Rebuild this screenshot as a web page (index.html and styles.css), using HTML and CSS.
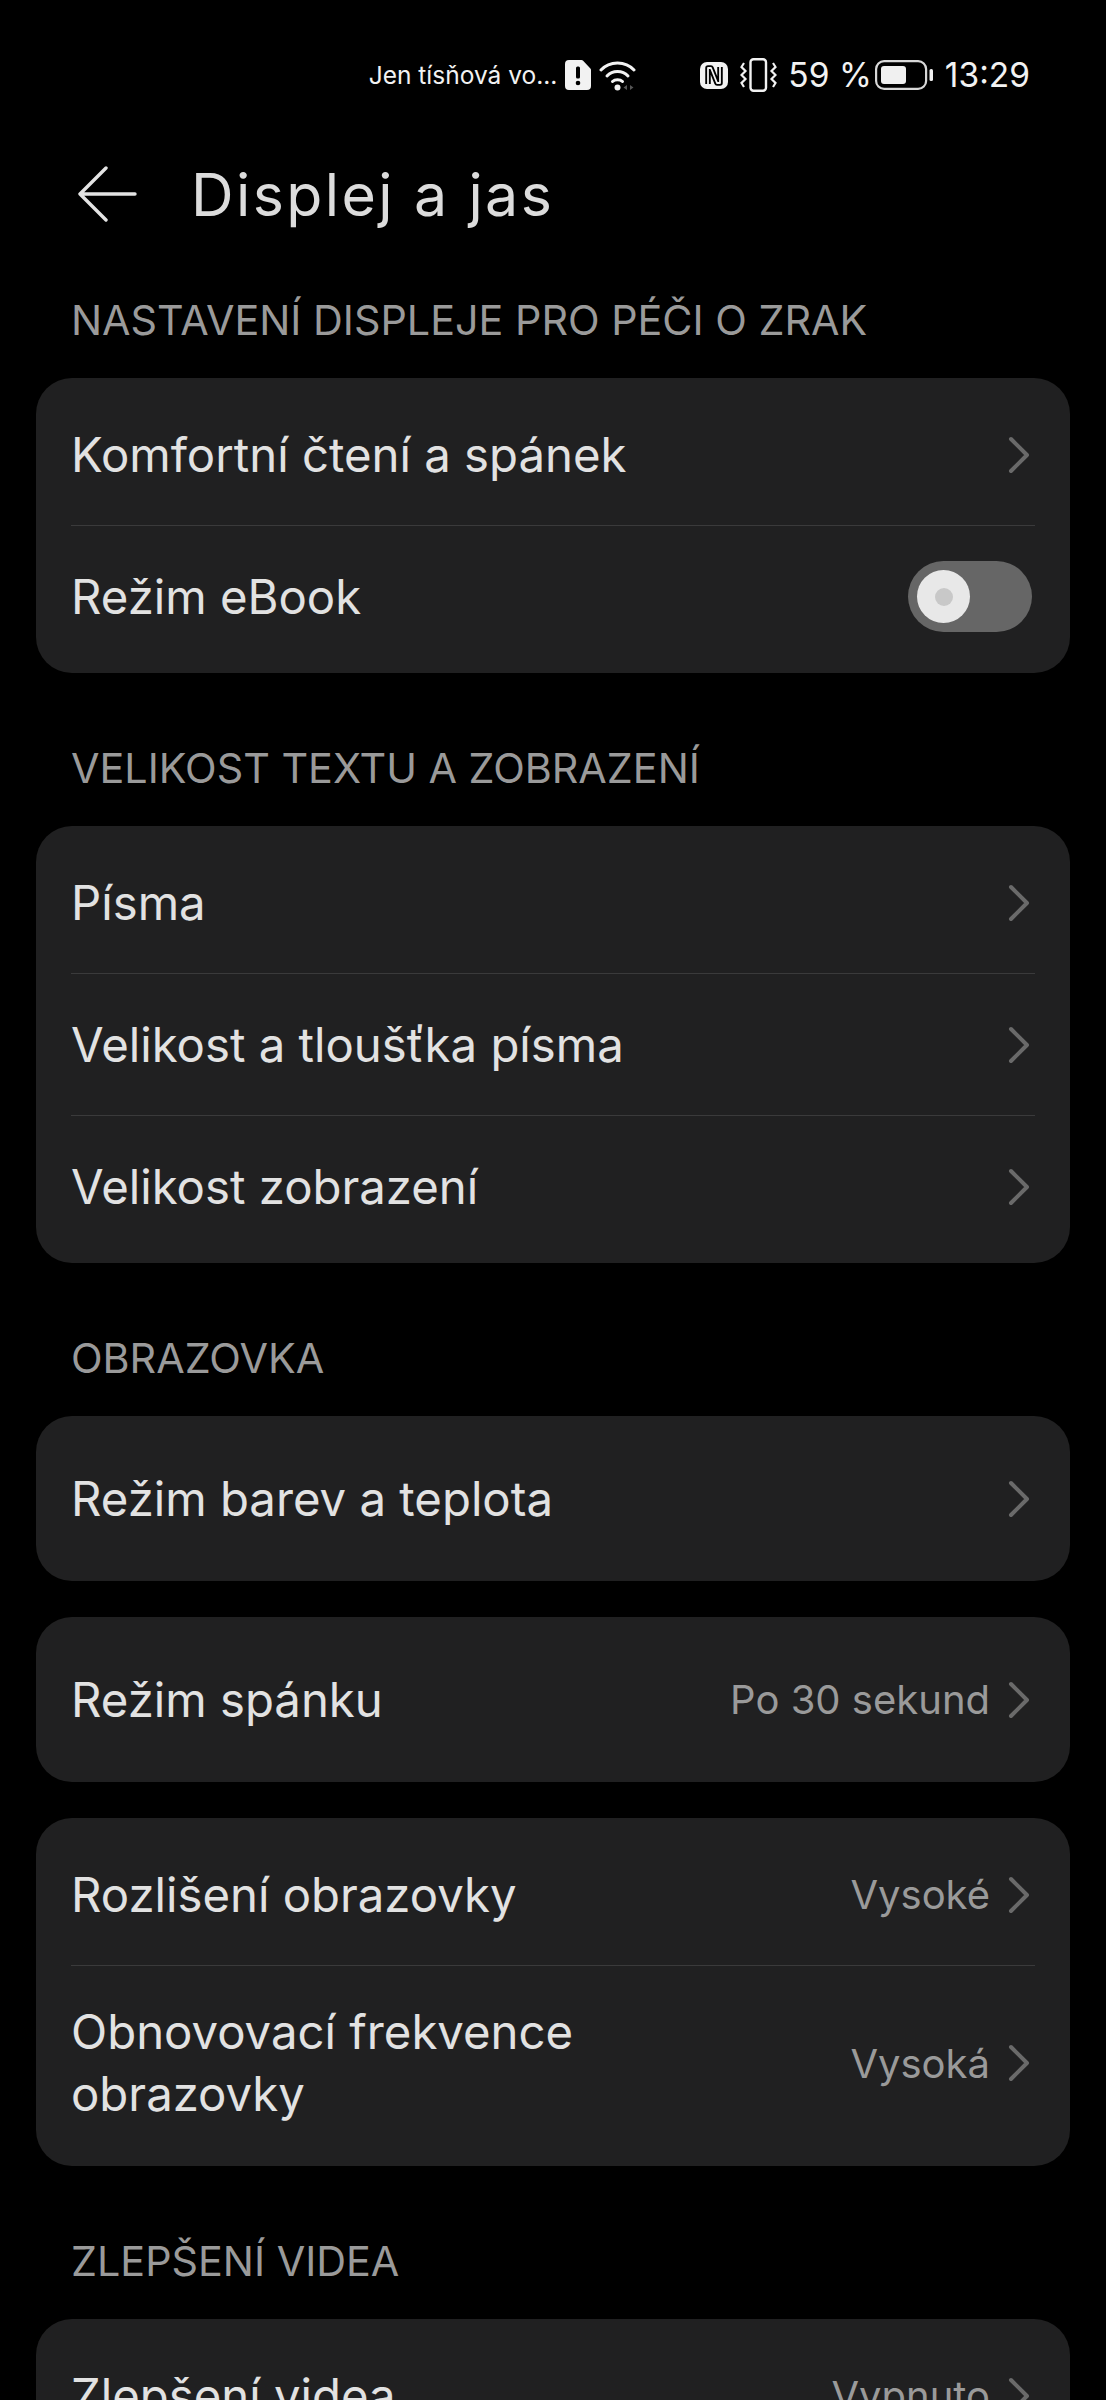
FILE: index.html
```html
<!DOCTYPE html>
<html lang="cs">
<head>
    <meta charset="UTF-8">
    <meta name="viewport" content="width=device-width, initial-scale=1.0">
    <title>Displej a jas</title>
    <link rel="stylesheet" href="styles.css">
</head>
<body>
    <div class="status-bar">
        <span class="carrier">Jen tísňová vo...</span>
        <svg class="ico-sim" viewBox="0 0 26 30"><path d="M4 0h12.5a2 2 0 0 1 1.4.6l7.5 7.8a2 2 0 0 1 .6 1.4V26a4 4 0 0 1-4 4H4a4 4 0 0 1-4-4V4a4 4 0 0 1 4-4z" fill="#f2f2f2"/><rect x="11" y="6.5" width="4" height="12" rx="1.5" fill="#000"/><circle cx="13" cy="23" r="2.3" fill="#000"/></svg>
        <svg class="ico-wifi" viewBox="0 0 37 31"><g fill="none" stroke="#f2f2f2" stroke-width="3" stroke-linecap="round"><path d="M2 10c8.500-9.500 24.500-9.500 33 0"/><path d="M8 16c5.500-6 15.500-6 21 0"/><path d="M13.500 21.500c2.500-2.500 7.500-2.500 10 0"/></g><circle cx="18.500" cy="27.500" r="3" fill="#f2f2f2"/><path d="M28 25v5l-3.500-2.500zM31 25v5l3.500-2.500z" fill="#555"/></svg>
        <svg class="ico-nfc" viewBox="0 0 28 27"><rect width="28" height="27" rx="7" fill="#f2f2f2"/><path d="M8 22V6h3l6 15h3V5" fill="none" stroke="#000" stroke-width="5.500" stroke-linejoin="round"/><path d="M8 22V6h3l6 15h3V5" fill="none" stroke="#f2f2f2" stroke-width="1.800" stroke-linejoin="round"/></svg>
        <svg class="ico-vibrate" viewBox="0 0 37 34"><rect x="10.500" y="1.200" width="15.500" height="31.600" rx="3" fill="none" stroke="#f2f2f2" stroke-width="2.400"/><g fill="none" stroke="#f2f2f2" stroke-width="2.200"><path d="M4 5L1.500 9l4 4-4 4 4 4-4 4 2.500 4"/><path d="M33 5l2.500 4-4 4 4 4-4 4 4 4-2.500 4"/></g></svg>
        <span class="battery-pct">59 %</span>
        <svg class="ico-battery" viewBox="0 0 58 30"><rect x="1.100" y="1.100" width="50" height="27.800" rx="8" fill="none" stroke="#d8d8d8" stroke-width="2.200"/><rect x="6" y="6" width="25" height="18" rx="3" fill="#f0f0f0"/><rect x="54.500" y="9" width="3.500" height="12" rx="1.500" fill="#f0f0f0"/></svg>
        <span class="clock">13:29</span>
    </div>

    <header class="title-bar">
        <svg class="back" viewBox="0 0 60 56"><path d="M29 2L3 28l26 26M3 28h55" fill="none" stroke="#e4e4e4" stroke-width="3.4" stroke-linecap="round" stroke-linejoin="round"/></svg>
        <h1>Displej a jas</h1>
    </header>

    <main>
        <h2>NASTAVENÍ DISPLEJE PRO PÉČI O ZRAK</h2>
        <section class="card">
            <div class="row">
                <span class="label">Komfortní čtení a spánek</span>
                <svg class="chevron" viewBox="0 0 22 38"><path d="M3 3l16 16L3 35" /></svg>
            </div>
            <div class="row">
                <span class="label">Režim eBook</span>
                <span class="toggle"><span class="knob"></span></span>
            </div>
        </section>

        <h2>VELIKOST TEXTU A ZOBRAZENÍ</h2>
        <section class="card">
            <div class="row">
                <span class="label">Písma</span>
                <svg class="chevron" viewBox="0 0 22 38"><path d="M3 3l16 16L3 35" /></svg>
            </div>
            <div class="row">
                <span class="label">Velikost a tloušťka písma</span>
                <svg class="chevron" viewBox="0 0 22 38"><path d="M3 3l16 16L3 35" /></svg>
            </div>
            <div class="row">
                <span class="label">Velikost zobrazení</span>
                <svg class="chevron" viewBox="0 0 22 38"><path d="M3 3l16 16L3 35" /></svg>
            </div>
        </section>

        <h2>OBRAZOVKA</h2>
        <section class="card">
            <div class="row row-single">
                <span class="label">Režim barev a teplota</span>
                <svg class="chevron" viewBox="0 0 22 38"><path d="M3 3l16 16L3 35" /></svg>
            </div>
        </section>
        <section class="card next">
            <div class="row row-single">
                <span class="label">Režim spánku</span>
                <span class="value">Po 30 sekund</span>
                <svg class="chevron" viewBox="0 0 22 38"><path d="M3 3l16 16L3 35" /></svg>
            </div>
        </section>
        <section class="card next">
            <div class="row">
                <span class="label">Rozlišení obrazovky</span>
                <span class="value">Vysoké</span>
                <svg class="chevron" viewBox="0 0 22 38"><path d="M3 3l16 16L3 35" /></svg>
            </div>
            <div class="row row-tall">
                <span class="label">Obnovovací frekvence<br>obrazovky</span>
                <span class="value">Vysoká</span>
                <svg class="chevron" viewBox="0 0 22 38"><path d="M3 3l16 16L3 35" /></svg>
            </div>
        </section>

        <h2>ZLEPŠENÍ VIDEA</h2>
        <section class="card">
            <div class="row">
                <span class="label">Zlepšení videa</span>
                <span class="value">Vypnuto</span>
                <svg class="chevron" viewBox="0 0 22 38"><path d="M3 3l16 16L3 35" /></svg>
            </div>
        </section>
    </main>
</body>
</html>
```

FILE: styles.css
```css
html, body {
    height: 2400px;
    overflow: hidden;
}

body {
    margin: 0;
    padding: 0;
    background-color: #000;
    color: #e2e2e2;
    font-family: Inter, "Noto Sans", sans-serif;
}

/* status bar */
.status-bar {
    height: 56px;
    padding-top: 47px;
    padding-right: 76px;
    display: flex;
    align-items: center;
    justify-content: flex-end;
    color: #f2f2f2;
}

.carrier {
    font-size: 24.5px;
    margin-right: 8px;
}

.battery-pct,
.clock {
    font-size: 33.5px;
}

.ico-sim { width: 26px; height: 30px; margin-right: 8px; }
.ico-wifi { width: 37px; height: 31px; margin-right: 64px; }
.ico-nfc { width: 28px; height: 27px; margin-right: 12px; }
.ico-vibrate { width: 37px; height: 34px; margin-right: 11px; }
.ico-battery { width: 58px; height: 30px; margin: 0 12px 0 3px; }

/* title */
.title-bar {
    height: 96px;
    margin-top: 43px;
    padding-left: 77px;
    display: flex;
    align-items: center;
}

.back {
    width: 60px;
    height: 56px;
}

h1 {
    margin: 0 0 0 54px;
    font-size: 59px;
    font-weight: 400;
    letter-spacing: 2.4px;
    color: #dcdcdc;
}

/* sections */
main {
    padding: 49px 36px 0;
}

h2 {
    margin: 0;
    padding: 0 35px;
    height: 58px;
    line-height: 58px;
    font-size: 41.3px;
    font-weight: 400;
    color: #9a9a9a;
}

.card {
    background-color: #202021;
    border-radius: 36px;
    padding: 6px 35px;
    margin-top: 29px;
    margin-bottom: 66px;
}

.card.next {
    margin-top: -30px;
}

.row {
    min-height: 141px;
    display: flex;
    align-items: center;
    border-top: 1px solid #3a3a3b;
}

.row:first-child {
    border-top: none;
}

.row-single {
    min-height: 153px;
}

.row-tall {
    min-height: 194px;
}

.label {
    flex: 1;
    font-size: 47.3px;
    line-height: 62px;
    color: #e2e2e2;
}

.value {
    font-size: 40px;
    color: #9a9a9a;
    margin-right: 18px;
}

.chevron {
    width: 22px;
    height: 38px;
    margin-right: 5px;
    fill: none;
    stroke: #6a6a6a;
    stroke-width: 4;
    stroke-linecap: round;
    stroke-linejoin: round;
}

/* toggle */
.toggle {
    width: 124px;
    height: 71px;
    margin-right: 3px;
    border-radius: 36px;
    background-color: #666;
    display: flex;
    align-items: center;
    padding-left: 9px;
    box-sizing: border-box;
}

.knob {
    width: 53px;
    height: 53px;
    border-radius: 50%;
    background-color: #e8e8e8;
    display: flex;
    align-items: center;
    justify-content: center;
}

.knob::after {
    content: "";
    width: 18px;
    height: 18px;
    border-radius: 50%;
    background-color: #c8c8c8;
}
```
